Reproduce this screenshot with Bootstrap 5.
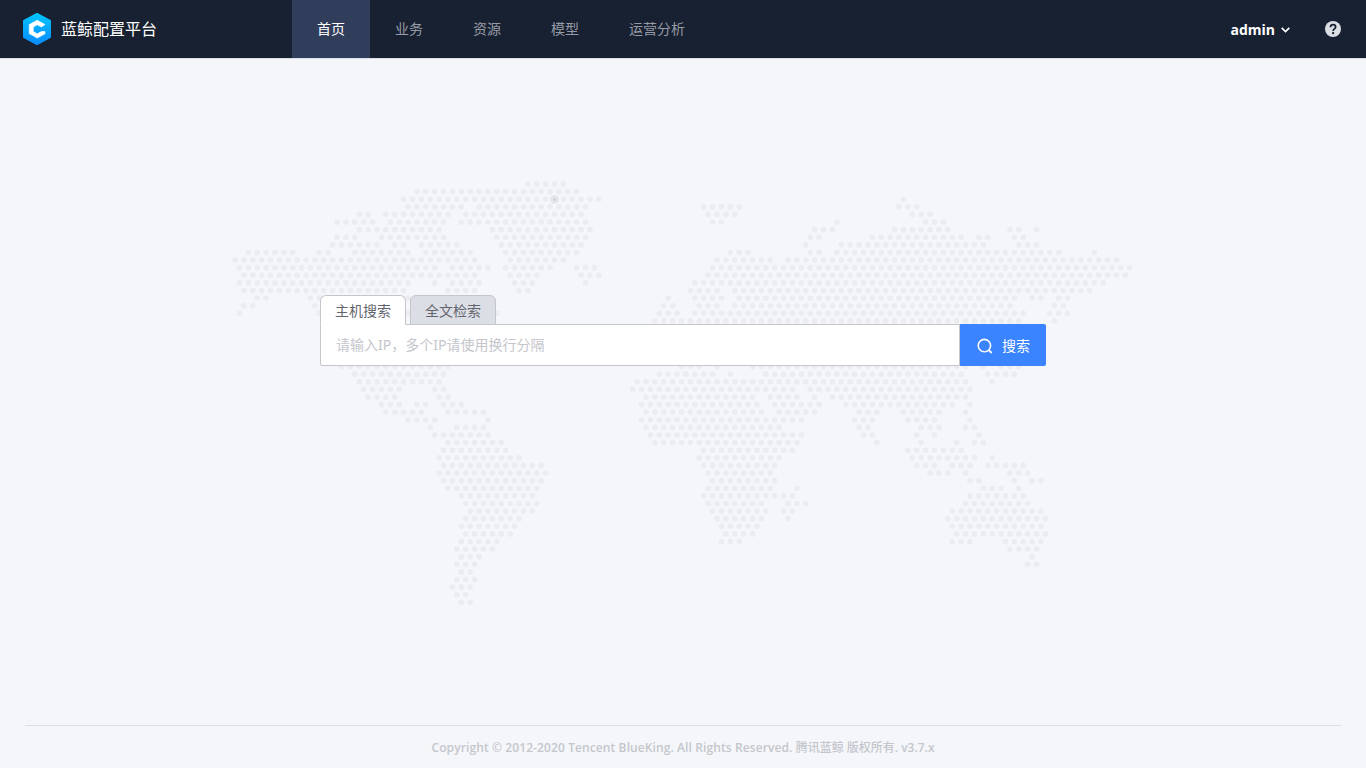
<!DOCTYPE html>
<html lang="zh-CN">
<head>
<meta charset="utf-8">
<meta name="viewport" content="width=device-width, initial-scale=1">
<title>蓝鲸配置平台</title>
<link href="https://cdn.jsdelivr.net/npm/bootstrap@5.3.0/dist/css/bootstrap.min.css" rel="stylesheet">
<style>
  body { font-family: "Noto Sans", "Noto Sans CJK SC", sans-serif; font-size: 14px; line-height: 20px; background: #f5f6fa; color: #63656e; }
  .top-bar { height: 59px; background: #182132; border-bottom: 1px solid #dcdee5; }
  .brand-area { width: 292px; padding-left: 23px; gap: 10px; }
  .brand-name { font-size: 16px; color: #fff; }
  .top-bar .nav-link { height: 58px; padding: 0 25px; line-height: 58px; color: #979ba5; border-radius: 0; }
  .top-bar .nav-link.active { background: #303d5b; color: #fff; }
  .user-area { padding-right: 25px; gap: 34px; }
  .user-name { font: 700 14px/20px "Open Sans", sans-serif; color: #fff; gap: 6px; padding: 2px 1px 0 0; }
  .world-map { left: 50%; top: 121px; transform: translateX(-50%); }
  .search-area { width: 726px; margin-top: 236px; }
  .search-area .nav-tabs { gap: 4px; border: 0; margin-bottom: -1px; position: relative; }
  .search-area .nav-tabs .nav-link { width: 86px; height: 30px; padding: 0; margin: 0; line-height: 30px; text-align: center; background: #dcdee5; border: 1px solid #c4c6cc; border-radius: 6px 6px 0 0; color: #63656e; }
  .search-area .nav-tabs .nav-link.active { background: #fff; border-bottom-color: #fff; }
  .search-area .form-control { height: 42px; padding: 0 16px 1px 15px; font-size: 14px; border: 1px solid #c4c6cc; border-radius: 2px 0 0 2px; box-shadow: none; }
  .search-area .form-control::placeholder { color: #c4c6cc; opacity: 1; }
  .search-btn { width: 86px; height: 42px; padding: 0 0 0 1px; font-size: 14px; gap: 9px; background: #3a84ff; color: #fff; border: 0; border-radius: 0 2px 2px 0; }
  .search-btn svg { margin-top: 2px; }
  .site-footer { margin: 0 25px; height: 43px; border-top: 1px solid #dcdee5; font: 600 12px/43px "Open Sans", "Noto Sans CJK SC", sans-serif; color: #c4c6cc; }
  .site-footer .copy-line { letter-spacing: .1px; }
  .site-footer .owner-line { font-weight: 500; }
</style>
</head>
<body class="d-flex flex-column vh-100 overflow-hidden">
<header class="top-bar d-flex flex-shrink-0">
  <a class="brand-area d-flex align-items-center text-decoration-none" href="#">
    <svg width="28" height="32" viewBox="0 0 28 32">
      <defs><linearGradient id="brandFill" x1="0" y1="0" x2="0" y2="1"><stop offset="0" stop-color="#00c4ff"/><stop offset="1" stop-color="#0a8cff"/></linearGradient></defs>
      <path d="M14 1 27 8v16l-13 7L1 24V8z" fill="url(#brandFill)" stroke="url(#brandFill)" stroke-width="2" stroke-linejoin="round"/>
      <path d="M14.2 7.2 22 11.6 18.4 14 14.2 11.8 10.3 14v4.6l3.9 2.2 4.2-2.2L22 18.4v2.4l-7.8 4.3L6.2 20.6v-9z" fill="#fff" stroke="#fff" stroke-width=".6" stroke-linejoin="round"/>
    </svg>
    <span class="brand-name">蓝鲸配置平台</span>
  </a>
  <nav class="nav flex-nowrap">
    <a class="nav-link active" href="#">首页</a>
    <a class="nav-link" href="#">业务</a>
    <a class="nav-link" href="#">资源</a>
    <a class="nav-link" href="#">模型</a>
    <a class="nav-link" href="#">运营分析</a>
  </nav>
  <div class="user-area d-flex align-items-center ms-auto">
    <a class="user-name d-flex align-items-center text-decoration-none" href="#">admin
      <svg width="9" height="6" viewBox="0 0 9 6"><path d="M.7.8 4.5 4.6 8.3.8" fill="none" stroke="#fff" stroke-width="1.7"/></svg>
    </a>
    <svg width="16" height="16" viewBox="0 0 16 16"><circle cx="8" cy="8" r="8" fill="#dcdee5"/><path d="M5.4 6.3C5.4 4.6 6.5 3.7 8 3.7s2.6.9 2.6 2.3c0 1.9-2.5 1.9-2.5 4.1" fill="none" stroke="#182132" stroke-width="1.8"/><rect x="7.1" y="11.1" width="2" height="2" fill="#182132"/></svg>
  </div>
</header>

<main class="position-relative flex-grow-1">
  <svg class="world-map position-absolute" width="906" height="430" viewBox="230 180 906 430" aria-hidden="true">
    <path id="mapDots" fill="#ebecf0"/>
    <circle cx="554.5" cy="199.5" r="3.8" fill="#e7e8ec" stroke="#dcdde1" stroke-width=".8"/>
    <circle cx="554.5" cy="199.5" r="1.6" fill="#ced0d4"/>
  </svg>
  <section class="search-area position-relative mx-auto">
    <div class="nav nav-tabs">
      <button class="nav-link active" type="button">主机搜索</button>
      <button class="nav-link" type="button">全文检索</button>
    </div>
    <div class="d-flex">
      <input class="form-control flex-grow-1" type="text" placeholder="请输入IP，多个IP请使用换行分隔">
      <button class="search-btn btn d-flex flex-shrink-0 align-items-center justify-content-center" type="button">
        <svg width="16" height="16" viewBox="0 0 16 16"><circle cx="7.4" cy="7.6" r="6.2" fill="none" stroke="#fff" stroke-width="1.6"/><path d="m11.7 12 3 3" stroke="#fff" stroke-width="1.8"/></svg>
        <span>搜索</span>
      </button>
    </div>
  </section>
</main>

<footer class="site-footer flex-shrink-0 text-center"><span class="copy-line">Copyright © 2012-2020 Tencent BlueKing. All Rights Reserved. </span><span class="owner-line">腾讯蓝鲸 版权所有</span>. v3.7.x</footer>

<script src="https://cdn.jsdelivr.net/npm/bootstrap@5.3.0/dist/js/bootstrap.bundle.min.js"></script>
<script>
  // Dotted world map: one line per dot row, each entry is a run "first-last" in map units.
  const rows = `528-563
417-576
403-599 903
408-461 479-585 704-739 899-917
359-368 386-448 465-581 708-735 912-930
337-372 390-443 461-585 713-722 837 926-943
359-439 492-590 815-832 895-948 1010-1019 1037
337-355 381-443 497-585 810-819 872-961 979-988 1014-1023
332-377 394-403 421-457 501-581 806 841-983 1019-1037
248-292 319-328 355-408 426-470 505-576 730-748 810-819 837-1059 1094
235-474 510-563 717-770 788-1117
239-435 452-488 505-550 576-594 713-1130
244-474 510-537 581-599 708-1126
239-408 435 452-479 514-532 585 695-1103
244-403 448-474 519-528 691-717 735-1090
257-266 310-408 668 695-722 739-1014 1032-1041 1059-1068
244-253 315-395 664-673 699-717 735-1010 1054-1063
239 319-408 497 659-677 695-1023 1050-1068
655-1019 1054





341-448 682-699 717 753-966 983 1001-1019
355-443 659-713 730 766-961 988-1014
359-439 637-966 992
363-399 435-443 633-793 810-970
368-395 439-448 646-753 770-797 815 833-966
381-399 417-426 443-461 642-757 775-819 846-952 970
386-421 448-483 646-761 779-815 859-877 903-939 966
408-435 488 642-801 855-872 908-935 970
430 457-483 646-779 859-868 921-939 966-975
435-488 651-801 864-872 917 935 979
448-501 655-797 877 921 957 975-983
443-506 704-793 908-961
439-519 699-779 912-975 992
443-541 704-775 917-935 952-970 988-1023
439-546 708-770 930-948 966 1010-1028
443-541 713-775 970-979 1014 1032-1041
448-537 708-770 797 983-1001 1019
461-532 704-793 970-1023
466-537 708-761 788-806 966-1028
470-532 713-766 784-793 952-1041
466-519 717-761 788 948-1046
461-515 722-757 952-1041
466-510 726-753 957-1046
461-497 722-739 952-970 1006-1041
457-492 1010-1037
461-479 1032
457-474 1028-1037
461-470
457-474
452-470
457-466
461-470`.split("\n");
  const stepX = 8.875, stepY = 7.606, r = 2.8;
  let d = "";
  rows.forEach((line, i) => {
    const y = 184 + i * stepY;
    line.split(" ").filter(Boolean).forEach(run => {
      const [a, b = a] = run.split("-").map(Number);
      const origin = (a < 612 ? 235 : 628.3) + (i % 2) * stepX / 2;
      const first = Math.round((a - origin) / stepX), last = Math.round((b - origin) / stepX);
      for (let c = first; c <= last; c++) {
        const x = origin + c * stepX;
        d += `M${(x - r).toFixed(2)} ${y.toFixed(2)}a${r} ${r} 0 1 0 ${2 * r} 0a${r} ${r} 0 1 0 ${-2 * r} 0`;
      }
    });
  });
  document.getElementById("mapDots").setAttribute("d", d);
</script>
</body>
</html>
